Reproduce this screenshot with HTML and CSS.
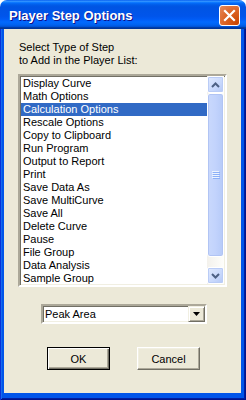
FILE: index.html
```html
<!DOCTYPE html>
<html>
<head>
<meta charset="utf-8">
<link rel="stylesheet" href="styles.css">
</head>
<body>
<div class="window">
  <div class="titlebar">
    <span class="title">Player Step Options</span>
    <div class="close">
      <svg width="13" height="13" viewBox="0 0 13 13"><path d="M2 2 L11 11 M11 2 L2 11" stroke="#fff" stroke-width="2.2" stroke-linecap="square"/></svg>
    </div>
  </div>
  <div class="frame">
    <div class="client">
      <div class="label">Select Type of Step<br>to Add in the Player List:</div>
      <div class="listbox">
        <ul class="items">
          <li>Display Curve</li>
          <li>Math Options</li>
          <li class="sel">Calculation Options</li>
          <li>Rescale Options</li>
          <li>Copy to Clipboard</li>
          <li>Run Program</li>
          <li>Output to Report</li>
          <li>Print</li>
          <li>Save Data As</li>
          <li>Save MultiCurve</li>
          <li>Save All</li>
          <li>Delete Curve</li>
          <li>Pause</li>
          <li>File Group</li>
          <li>Data Analysis</li>
          <li>Sample Group</li>
        </ul>
        <div class="scrollbar">
          <div class="sbtn">
            <svg width="9" height="6" viewBox="0 0 9 6"><path d="M1 5 L4.5 1.5 L8 5" fill="none" stroke="#4D6185" stroke-width="2"/></svg>
          </div>
          <div class="thumb">
            <svg width="8" height="8" viewBox="0 0 8 8"><path d="M0 0.5 H7 M0 2.5 H7 M0 4.5 H7 M0 6.5 H7" stroke="#EEF4FE" stroke-width="1"/><path d="M1 1.5 H8 M1 3.5 H8 M1 5.5 H8 M1 7.5 H8" stroke="#8CB0F8" stroke-width="1"/></svg>
          </div>
          <div class="track"></div>
          <div class="sbtn">
            <svg width="9" height="6" viewBox="0 0 9 6"><path d="M1 1 L4.5 4.5 L8 1" fill="none" stroke="#4D6185" stroke-width="2"/></svg>
          </div>
        </div>
      </div>
      <div class="combo">
        <span class="combo-text">Peak Area</span>
        <div class="combo-btn">
          <svg width="7" height="4" viewBox="0 0 7 4"><path d="M0 0 H7 L3.5 4 Z" fill="#000"/></svg>
        </div>
      </div>
      <div class="buttons">
        <div class="btn default"><span>OK</span></div>
        <div class="btn"><span>Cancel</span></div>
      </div>
    </div>
  </div>
</div>
</body>
</html>
```

FILE: styles.css
```css
html, body {
  margin: 0;
  padding: 0;
  background: #ffffff;
}
body {
  width: 246px;
  height: 400px;
  overflow: hidden;
  font-family: "Liberation Sans", Arial, sans-serif;
  font-size: 11px;
  color: #000;
}
.window {
  width: 246px;
  height: 400px;
  display: flex;
  flex-direction: column;
}
.titlebar {
  height: 29px;
  flex: none;
  border-radius: 7px 7px 0 0;
  background: linear-gradient(to bottom, #0058EE 0%, #3593FF 4%, #288EFF 6%, #127DFF 8%, #036FFC 10%, #0262EE 14%, #0057E5 20%, #0054E3 24%, #0055EB 56%, #005BF5 66%, #026AFE 76%, #0062EF 86%, #0052D6 92%, #0040AB 94%, #003092 100%);
  display: flex;
  align-items: center;
  padding: 0 6px 0 9px;
  box-sizing: border-box;
  justify-content: space-between;
}
.title {
  color: #fff;
  font-family: "Liberation Sans", Arial, sans-serif;
  font-weight: bold;
  font-size: 13px;
  text-shadow: 1px 1px #0F1089;
  padding-top: 1px;
}
.close {
  width: 21px;
  height: 21px;
  box-sizing: border-box;
  border: 1px solid #fff;
  border-radius: 3px;
  background: radial-gradient(circle at 90% 90%, #CC4600 0%, #DC6527 55%, #E58A5D 100%);
  display: flex;
  align-items: center;
  justify-content: center;
  margin-top: 1px;
}
.frame {
  flex: 1;
  display: flex;
  background: #0055EA;
  padding: 0 5px 7px 4px;
  box-shadow: inset 1px 0 #0831D9, inset -1px -1px #00138C, inset 2px 0 #166AEE, inset -2px -2px #001EA0;
}
.client {
  flex: 1;
  background: #ECE9D8;
  display: flex;
  flex-direction: column;
  padding: 12px 14px 0 14px;
}
.label {
  line-height: 13px;
  padding-left: 1px;
}
.listbox {
  margin-top: 7px;
  height: 213px;
  box-sizing: border-box;
  border: 2px solid;
  border-color: #ACA899 #FFFFFF #FFFFFF #ACA899;
  box-shadow: inset 1px 1px #716F64, inset -1px -1px #F1EFE2;
  background: #fff;
  display: flex;
  padding: 0 1px 1px 1px;
}
.items {
  list-style: none;
  margin: 0;
  padding: 1px 0 0 0;
  flex: 1;
}
.items li {
  height: 13px;
  line-height: 13px;
  padding-left: 2px;
  white-space: nowrap;
}
.items li.sel {
  background: #316AC5;
  color: #fff;
}
.scrollbar {
  width: 17px;
  flex: none;
  display: flex;
  flex-direction: column;
  background: linear-gradient(to right, #F3F1EC, #FEFEFB);
}
.sbtn {
  height: 17px;
  flex: none;
  box-sizing: border-box;
  border: 1px solid #fff;
  border-radius: 2px;
  background: linear-gradient(135deg, #E1EAFE 0%, #C8D8FC 60%, #B4C8F6 100%);
  box-shadow: inset 0 0 0 1px #BACCF6;
  display: flex;
  align-items: center;
  justify-content: center;
}
.thumb {
  height: 164px;
  flex: none;
  box-sizing: border-box;
  border: 1px solid #fff;
  border-radius: 3px;
  background: linear-gradient(to right, #C9D8FC 0%, #C2D3FC 50%, #B6CAF8 100%);
  box-shadow: inset 0 0 0 1px #B1C4F4;
  display: flex;
  align-items: center;
  justify-content: center;
}
.track {
  flex: 1;
}
.combo {
  margin: 17px 20px 0 23px;
  height: 20px;
  box-sizing: border-box;
  border: 2px solid;
  border-color: #ACA899 #FFFFFF #FFFFFF #ACA899;
  box-shadow: inset 1px 1px #716F64, inset -1px -1px #F1EFE2;
  background: #fff;
  display: flex;
  align-items: stretch;
  padding: 0 0 0 2px;
}
.combo-text {
  flex: 1;
  line-height: 16px;
  font-size: 11px;
}
.combo-btn {
  width: 17px;
  flex: none;
  box-sizing: border-box;
  background: #ECE9D8;
  border: 1px solid;
  border-color: #F1EFE2 #716F64 #716F64 #F1EFE2;
  box-shadow: inset 1px 1px #fff, inset -1px -1px #ACA899;
  display: flex;
  align-items: center;
  justify-content: center;
}
.buttons {
  display: flex;
  margin-top: 23px;
  padding-left: 29px;
  gap: 27px;
}
.btn {
  width: 63px;
  height: 23px;
  box-sizing: border-box;
  border: 1px solid;
  border-color: #fff #716F64 #716F64 #fff;
  box-shadow: inset -1px -1px #ACA899, inset 1px 1px #F1EFE2;
  display: flex;
  align-items: center;
  justify-content: center;
  font-size: 11px;
}
.btn.default {
  border: 1px solid #000;
  box-shadow: inset 1px 1px #fff, inset -1px -1px #716F64, inset -2px -2px #ACA899;
}
```
